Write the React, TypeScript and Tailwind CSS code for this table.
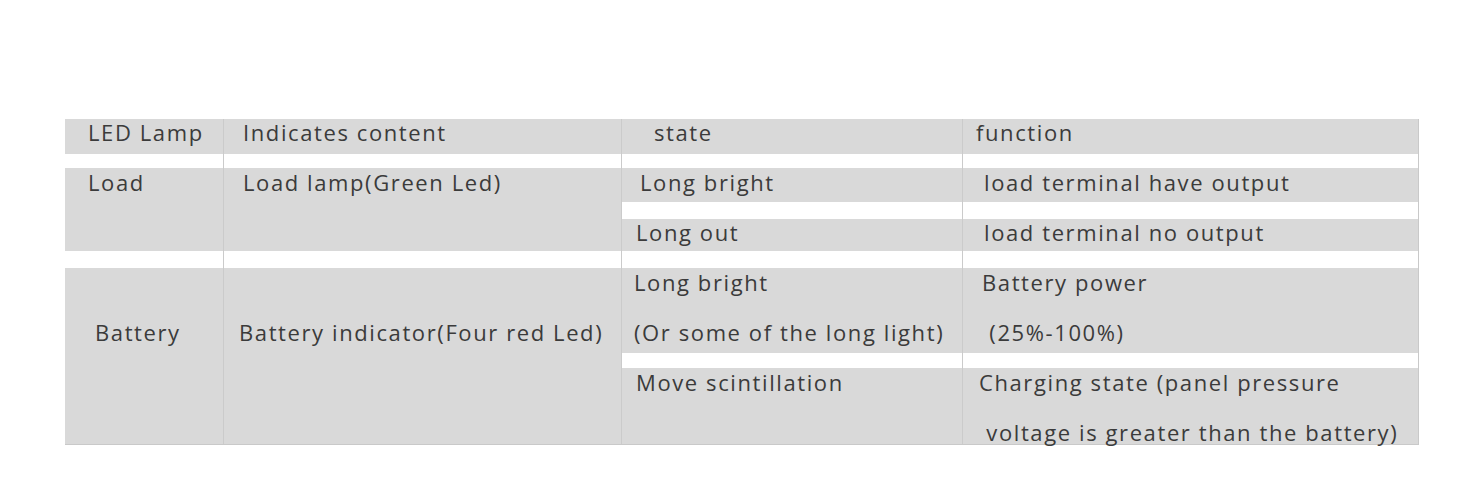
const font = { fontFamily: '"Open Sans", "Noto Sans", sans-serif' };

type Cell = {
  col: string;
  row: string;
  text?: string[];
  pad?: string;
  white?: boolean;
};

const cells: Cell[] = [
  // header
  { col: "col-start-1", row: "row-start-1", text: ["LED Lamp"], pad: "pl-[23px] -mt-[12px]" },
  { col: "col-start-2", row: "row-start-1", text: ["Indicates content"], pad: "pl-[19px] -mt-[12px]" },
  { col: "col-start-3", row: "row-start-1", text: ["state"], pad: "pl-[32px] -mt-[12px]" },
  { col: "col-start-4", row: "row-start-1", text: ["function"], pad: "pl-[13px] -mt-[12px]" },
  // white band under header
  { col: "col-start-1", row: "row-start-2", white: true },
  { col: "col-start-2", row: "row-start-2", white: true },
  { col: "col-start-3", row: "row-start-2", white: true },
  { col: "col-start-4", row: "row-start-2", white: true },
  // load
  { col: "col-start-1", row: "row-start-3 row-span-3", text: ["Load"], pad: "pl-[23px] -mt-[11px]" },
  { col: "col-start-2", row: "row-start-3 row-span-3", text: ["Load lamp(Green Led)"], pad: "pl-[19px] -mt-[11px]" },
  { col: "col-start-3", row: "row-start-3", text: ["Long bright"], pad: "pl-[18px] -mt-[11px]" },
  { col: "col-start-4", row: "row-start-3", text: ["load terminal have output"], pad: "pl-[21px] -mt-[11px]" },
  { col: "col-start-3", row: "row-start-4", white: true },
  { col: "col-start-4", row: "row-start-4", white: true },
  { col: "col-start-3", row: "row-start-5", text: ["Long out"], pad: "pl-[14px] -mt-[12px]" },
  { col: "col-start-4", row: "row-start-5", text: ["load terminal no output"], pad: "pl-[21px] -mt-[12px]" },
  // white band under load
  { col: "col-start-1", row: "row-start-6", white: true },
  { col: "col-start-2", row: "row-start-6", white: true },
  { col: "col-start-3", row: "row-start-6", white: true },
  { col: "col-start-4", row: "row-start-6", white: true },
  // battery
  { col: "col-start-1", row: "row-start-7 row-span-3", text: ["Battery"], pad: "pl-[30px] pt-[39px]" },
  { col: "col-start-2", row: "row-start-7 row-span-3", text: ["Battery indicator(Four red Led)"], pad: "pl-[15px] pt-[39px]" },
  { col: "col-start-3", row: "row-start-7", text: ["Long bright", "(Or some of the long light)"], pad: "pl-[12px] -mt-[11px]" },
  { col: "col-start-4", row: "row-start-7", text: ["Battery power", "\u00a0(25%-100%)"], pad: "pl-[19px] -mt-[11px]" },
  { col: "col-start-3", row: "row-start-8", white: true },
  { col: "col-start-4", row: "row-start-8", white: true },
  { col: "col-start-3", row: "row-start-9", text: ["Move scintillation"], pad: "pl-[14px] -mt-[11px]" },
  { col: "col-start-4", row: "row-start-9", text: ["Charging state (panel pressure", "\u00a0voltage is greater than the battery)"], pad: "pl-[16px] -mt-[11px]" },
];

export default function App() {
  return (
    <div className="min-h-[500px] w-[1458px] bg-white pl-[65px] pt-[119px]" style={font}>
      <div className="grid w-[1354px] grid-cols-[158px_397px_340px_455px] grid-rows-[35px_14px_34px_17px_32px_17px_85px_15px_76px] gap-x-px border-b border-r border-[#c9c9c9] bg-[#cbcbcb]">
        {cells.map((c, i) => (
          <div
            key={i}
            className={`${c.col} ${c.row} overflow-visible ${c.white ? "bg-white" : "bg-[#d9d9d9]"}`}
          >
            {c.text && (
              <div className={`${c.pad} whitespace-nowrap text-[22px] leading-[50px] tracking-[1.6px] text-[#3b3b3b]`}>
                {c.text.map((t, j) => (
                  <div key={j}>{t}</div>
                ))}
              </div>
            )}
          </div>
        ))}
      </div>
    </div>
  );
}
